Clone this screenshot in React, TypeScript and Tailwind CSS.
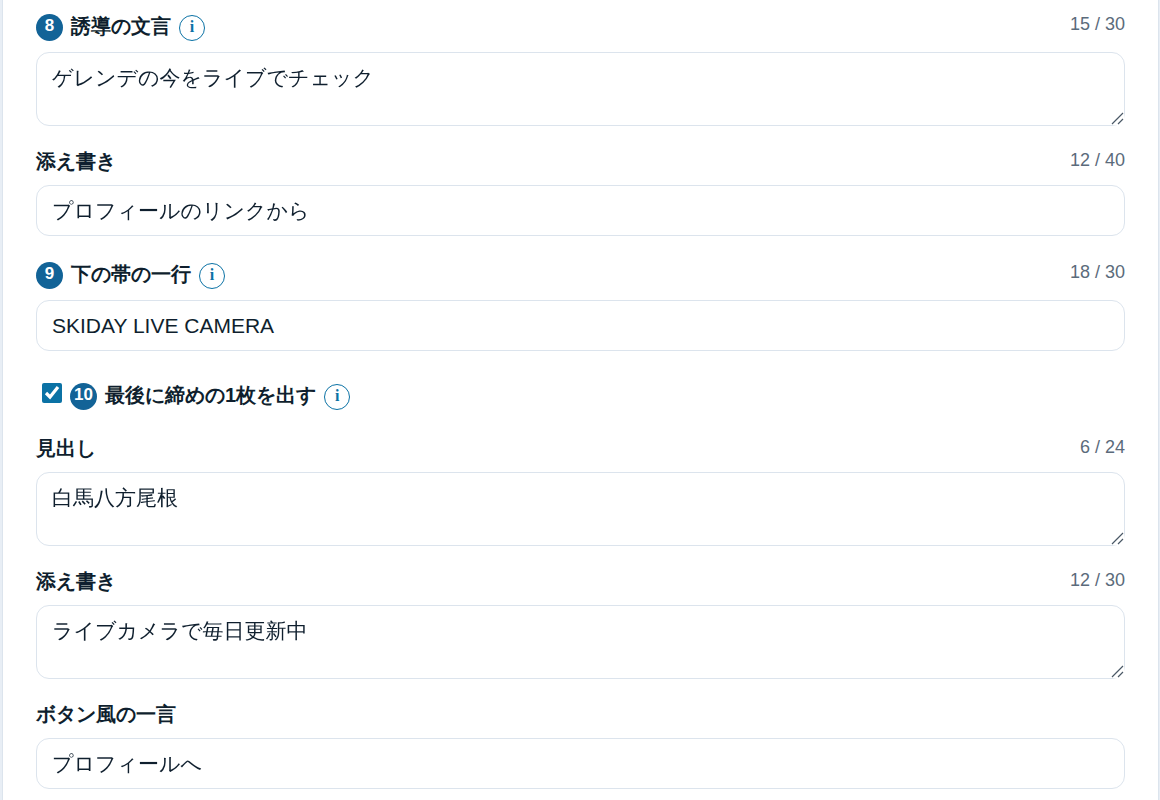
import { useId, useState, type ReactNode } from "react";

const boxStyle =
  "block w-full rounded-[13px] border border-[#dce4ed] bg-white px-[15px] text-[21px] text-[#0f1f2e] outline-none focus:border-[#0b72a5]";

const labelStyle = "pb-[2px] font-['Liberation_Sans',sans-serif] text-[20px] leading-[25px] font-bold";

function StepBadge({ children }: { children: ReactNode }) {
  return (
    <span className="flex size-[27px] shrink-0 items-start justify-center rounded-full bg-[#126397] text-[17px] leading-6 font-bold text-white">
      {children}
    </span>
  );
}

function InfoButton({ topic }: { topic: string }) {
  return (
    <button
      type="button"
      aria-label={`${topic}の説明`}
      className="flex size-[26px] shrink-0 items-start justify-center rounded-full border border-[#0b72a5] bg-white font-['Liberation_Serif',serif] text-[16px] leading-[22px] font-bold text-[#0b72a5]"
    >
      i
    </button>
  );
}

function ResizeGrip() {
  return (
    <svg
      aria-hidden="true"
      viewBox="0 0 13 13"
      className="pointer-events-none absolute right-px bottom-px size-[13px] bg-white"
      fill="none"
      stroke="#4a5866"
      strokeWidth="1.2"
    >
      <path d="M1 12 12 1M7 12l5-5" />
    </svg>
  );
}

type FieldProps = {
  label: string;
  initial: string;
  count?: string;
  step?: number;
  multiline?: boolean;
};

function Field({ label, initial, count, step, multiline }: FieldProps) {
  const id = useId();
  const [value, setValue] = useState(initial);
  return (
    <div>
      <div className={step ? "flex items-start justify-between pt-[2px] pb-[11px]" : "flex items-start justify-between pb-[8px]"}>
        <div className={step ? "flex items-center gap-2 pt-[2px]" : "flex h-[29px] items-center"}>
          {step && <StepBadge>{step}</StepBadge>}
          <label htmlFor={id} className={labelStyle}>
            {label}
          </label>
          {step && <InfoButton topic={label} />}
        </div>
        {count && <span className="text-[18px] leading-6 text-[#5b6b7b]">{count}</span>}
      </div>
      {multiline ? (
        <div className="relative">
          <textarea
            id={id}
            value={value}
            onChange={(e) => setValue(e.target.value)}
            className={`${boxStyle} h-[74px] resize-y py-[10px] leading-[30px]`}
          />
          <ResizeGrip />
        </div>
      ) : (
        <input
          id={id}
          type="text"
          value={value}
          onChange={(e) => setValue(e.target.value)}
          className={`${boxStyle} h-[51px]`}
        />
      )}
    </div>
  );
}

export default function App() {
  const [closing, setClosing] = useState(true);
  return (
    <main className="min-h-screen bg-[#e8eef5] pr-px pl-[2px] font-['Liberation_Sans','WenQuanYi_Zen_Hei','Noto_Sans_CJK_JP',sans-serif] text-[#0f1f2e]">
      <form className="flex min-h-screen flex-col gap-[22px] border-x border-[#dce4ed] bg-white px-[33px] pt-[10px] pb-[10px]">
        <Field step={8} label="誘導の文言" count="15 / 30" initial="ゲレンデの今をライブでチェック" multiline />
        <Field label="添え書き" count="12 / 40" initial="プロフィールのリンクから" />
        <Field step={9} label="下の帯の一行" count="18 / 30" initial="SKIDAY LIVE CAMERA" />
        <div className="flex items-start gap-2 pt-[10px] pb-[3px] pl-[6px]">
          <input
            id="closing"
            type="checkbox"
            checked={closing}
            onChange={(e) => setClosing(e.target.checked)}
            className="size-5 accent-[#0b72a5]"
          />
          <div className="flex items-center gap-2">
            <StepBadge>10</StepBadge>
            <label htmlFor="closing" className={labelStyle}>
              最後に締めの1枚を出す
            </label>
            <InfoButton topic="締めの1枚" />
          </div>
        </div>
        <Field label="見出し" count="6 / 24" initial="白馬八方尾根" multiline />
        <Field label="添え書き" count="12 / 30" initial="ライブカメラで毎日更新中" multiline />
        <Field label="ボタン風の一言" initial="プロフィールへ" />
      </form>
    </main>
  );
}
